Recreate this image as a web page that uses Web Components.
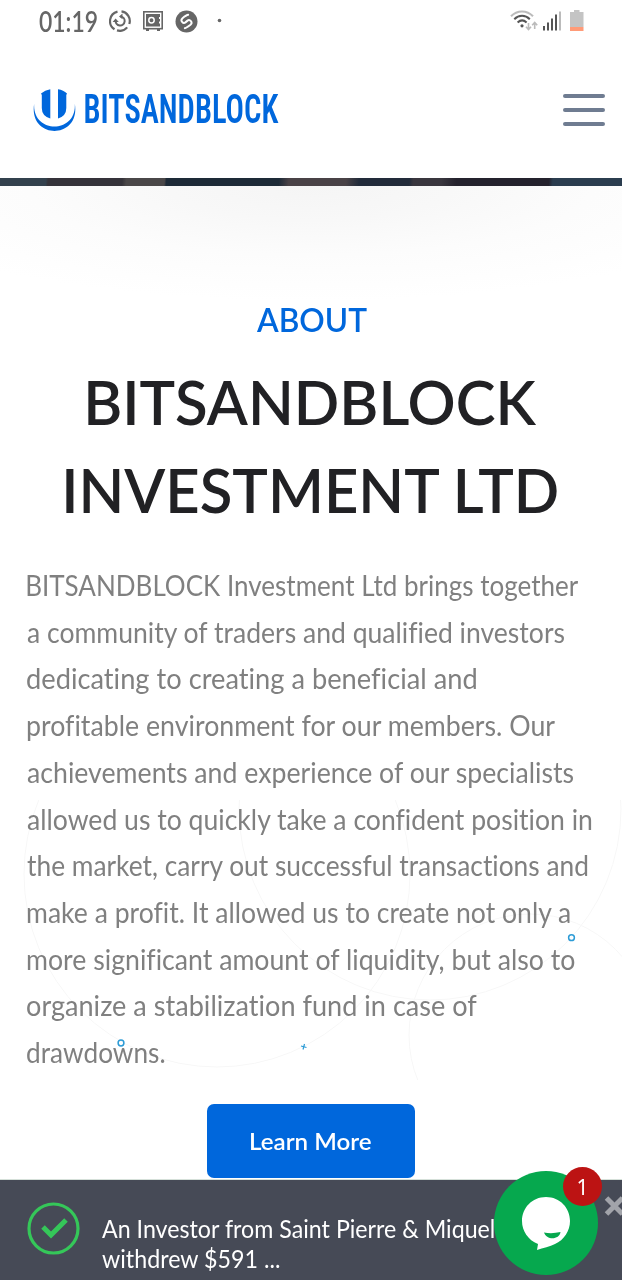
<!DOCTYPE html>
<html lang="en">
<head>
<meta charset="UTF-8">
<meta name="viewport" content="width=device-width, initial-scale=1.0">
<title>BITSANDBLOCK Investment Ltd</title>
<style>
    body {
        margin: 0;
        width: 622px;
        height: 1280px;
        overflow: hidden;
        position: relative;
        display: flex;
        flex-direction: column;
        background: #fff;
        font-family: Lato, "Liberation Sans", sans-serif;
        --primary: #0067dc;
    }
</style>
</head>
<body>
<status-bar></status-bar>
<site-header></site-header>
<hero-strip></hero-strip>
<about-section>
    <fit-text slot="label" width="111">ABOUT</fit-text>
    <fit-text slot="title" width="449">BITSANDBLOCK</fit-text>
    <fit-text slot="title" width="493">INVESTMENT LTD</fit-text>
    <fit-text width="551">BITSANDBLOCK Investment Ltd brings together</fit-text>
    <fit-text width="539">a community of traders and qualified investors</fit-text>
    <fit-text width="449">dedicating to creating a beneficial and</fit-text>
    <fit-text width="529">profitable environment for our members. Our</fit-text>
    <fit-text width="548">achievements and experience of our specialists</fit-text>
    <fit-text width="565">allowed us to quickly take a confident position in</fit-text>
    <fit-text width="561">the market, carry out successful transactions and</fit-text>
    <fit-text width="544">make a profit. It allowed us to create not only a</fit-text>
    <fit-text width="548">more significant amount of liquidity, but also to</fit-text>
    <fit-text width="450">organize a stabilization fund in case of</fit-text>
    <fit-text width="138">drawdowns.</fit-text>
    <fit-text slot="action" width="120">Learn More</fit-text>
</about-section>
<payout-toast>
    <fit-text width="393">An Investor from Saint Pierre &amp; Miquel</fit-text>
    <fit-text width="178">withdrew $591 ...</fit-text>
</payout-toast>
<chat-bubble count="1"></chat-bubble>

<script>
// One line of text, stretched so that its ink is exactly `width` px wide
class FitText extends HTMLElement {
    constructor() {
        super();
        this.attachShadow({ mode: 'open' });
    }

    connectedCallback() {
        const width = Number(this.getAttribute('width'));

        this.shadowRoot.innerHTML = `
            <style>
                :host { display: block; width: ${width}px; white-space: nowrap; }
                span { display: inline-block; transform-origin: 0 0; letter-spacing: 0.01px; font-variant-ligatures: none; }
            </style>
            <span><slot></slot></span>
        `;

        requestAnimationFrame(() => this.fit(width));
        this.fit(width);
    }

    fit(width) {
        const span = this.shadowRoot.querySelector('span');
        const ctx = document.createElement('canvas').getContext('2d');
        ctx.font = getComputedStyle(this).font;
        // any spacing at all turns the fi / ti ligatures off
        ctx.letterSpacing = '0.01px';
        const box = ctx.measureText(this.textContent.trim());
        const scale = width / (box.actualBoundingBoxLeft + box.actualBoundingBoxRight);
        span.style.transform = `translateX(${box.actualBoundingBoxLeft * scale}px) scaleX(${scale})`;
    }
}

class StatusBar extends HTMLElement {
    constructor() {
        super();
        this.attachShadow({ mode: 'open' });
    }

    connectedCallback() {
        this.shadowRoot.innerHTML = `
            <style>
                :host {
                    display: flex;
                    align-items: center;
                    height: 42px;
                    padding: 0 33px 0 39px;
                    box-sizing: border-box;
                    flex: none;
                    color: #666;
                }
                fit-text { font-size: 28px; font-weight: 600; line-height: 42px; font-family: Lato, sans-serif; }
                .icons { display: flex; align-items: center; gap: 12px; margin-left: 12px; flex: 1; }
                .signal { display: flex; align-items: center; gap: 5px; }
                svg { display: block; }
            </style>
            <fit-text width="58">01:19</fit-text>
            <div class="icons">
                <svg width="22" height="22" viewBox="0 0 22 22" fill="none" stroke="#666" stroke-width="2.2">
                    <path d="M8.500 1.600A9.700 9.700 0 0 0 5.500 19.200M8 20.400A9.700 9.700 0 0 0 18.200 17.400M20.300 14A9.700 9.700 0 0 0 12.500 1.400"/>
                    <path d="M6.700 10.500a4.500 4.500 0 1 0 5-4" stroke-width="2"/>
                    <path d="M3.600 12l3-3.400 3.200 3.400zM13.500 3.600v5.600l-3.500-2.700z" fill="#666" stroke="none"/>
                </svg>
                <svg width="20" height="20" viewBox="0 0 20 20" fill="none" stroke="#666">
                    <rect x=".8" y=".8" width="18.400" height="16.900" stroke-width="1.600"/>
                    <rect x="3" y="3" width="14" height="12.500" fill="#666" stroke="none"/>
                    <circle cx="8.500" cy="9.200" r="2.700" stroke="#fff" stroke-width="1.500"/>
                    <path d="M16.500 6v2M16.500 10.500v2" stroke="#fff"/>
                    <path d="M3 19h3M14 19h3" stroke-width="1.800"/>
                </svg>
                <svg width="23" height="23" viewBox="0 0 23 23">
                    <circle cx="11.500" cy="11.500" r="11" fill="#666"/>
                    <path d="M13.200 4.800Q11.500 5 7.500 8.200C4.800 10.500 8 14.500 10.800 12.300l2.400-2M9.800 18.200Q11.500 18 15.500 14.800C18.200 12.500 15 8.500 12.200 10.700l-2.400 2" fill="none" stroke="#fff" stroke-width="1.900" stroke-linecap="round"/>
                </svg>
                <svg width="20" height="22" viewBox="0 0 20 22"><circle cx="9.500" cy="10.500" r="1.800" fill="#666"/></svg>
            </div>
            <div class="signal">
                <svg width="28" height="22" viewBox="0 0 28 22" fill="none" stroke-width="2">
                    <path d="M1 6.300C7-.2 17-.2 23 6.300" stroke="#bbb"/>
                    <path d="M4.300 9.300c4.500-4.600 11-4.600 15.500 0M7.600 12.500c3-2.800 6-2.800 9 0" stroke="#555"/>
                    <circle cx="12" cy="15.800" r="1.600" fill="#555"/>
                    <path d="M18.500 13v6M16 16.800l2.500 2.800 2.500-2.800M24.700 19v-6M22.200 15.200l2.500-2.800 2.500 2.800" stroke="#bbb" stroke-width="1.600"/>
                </svg>
                <svg width="18" height="22" viewBox="0 0 18 22">
                    <path d="M0 16h2v4.500H0zM4 12.500h2v8H4zM8 8.500h2v12H8zM12 4.500h2v16h-2z" fill="#555"/>
                    <path d="M16 1.500h2v19h-2z" fill="#bbb"/>
                </svg>
                <svg width="23" height="22" viewBox="0 0 23 22">
                    <path d="M8 0h5.500v2H17.500v15H4V2h4z" fill="#c4c4c4"/>
                    <path d="M4 17h13.500v4H4z" fill="#ff9b78"/>
                </svg>
            </div>
        `;
    }
}

class SiteHeader extends HTMLElement {
    constructor() {
        super();
        this.attachShadow({ mode: 'open' });
    }

    connectedCallback() {
        this.shadowRoot.innerHTML = `
            <style>
                :host {
                    display: flex;
                    align-items: center;
                    justify-content: space-between;
                    height: 136px;
                    padding: 0 17px 0 33px;
                    box-sizing: border-box;
                    flex: none;
                    background: #fff;
                }
                .logo { display: flex; align-items: center; gap: 9px; color: var(--primary); }
                fit-text { font: condensed 600 40px/46px Roboto, sans-serif; }
                .menu { display: grid; gap: 10px; }
                .menu i { width: 42px; height: 4px; border-radius: 2px; background: #6f7c91; }
            </style>
            <div class="logo">
                <svg width="43" height="44" viewBox="0 0 43 44" fill="#0067dc">
                    <path d="M8 5.500Q12 2 17.300 1.300V30.500Q8.800 28 8.800 20V7zM25 1.300q5.500.7 9 4.200L33.300 7v13q0 8-8.300 10.500z"/>
                    <path d="M1.200 15.500C-1 46 44 46 41.800 15.500 48 52-5 52 1.200 15.500z"/>
                </svg>
                <fit-text width="194">BITSANDBLOCK</fit-text>
            </div>
            <div class="menu"><i></i><i></i><i></i></div>
        `;
    }
}

class HeroStrip extends HTMLElement {
    constructor() {
        super();
        this.attachShadow({ mode: 'open' });
    }

    connectedCallback() {
        this.shadowRoot.innerHTML = `
            <style>
                :host {
                    display: block;
                    flex: none;
                    height: 8px;
                    background: linear-gradient(95deg,
                        #33414d 0 46px, #35333a 48px 122px, #4a4748 126px 164px,
                        #1d2a37 166px 278px, #494246 288px 345px, #222b3a 358px 408px,
                        #39363e 412px 440px, #24222d 455px 547px, #2b3d4f 551px);
                }
            </style>
        `;
    }
}

class AboutSection extends HTMLElement {
    constructor() {
        super();
        this.attachShadow({ mode: 'open' });
    }

    connectedCallback() {
        this.shadowRoot.innerHTML = `
            <style>
                :host {
                    display: flex;
                    flex-direction: column;
                    position: relative;
                    height: 993px;
                    flex: none;
                    box-sizing: border-box;
                    padding-top: 108px;
                    background: radial-gradient(ellipse 470px 115px at 50% 0, #f5f5f5, #f8f8f8 30%, #fcfcfc 60%, #fff) no-repeat;
                }
                .label, .title, .action { display: flex; flex-direction: column; align-items: center; }
                .label { font-size: 33.500px; font-weight: 600; line-height: 50px; color: var(--primary); }
                .title { margin: 14px 0 0 3px; font-size: 62px; font-weight: 600; line-height: 87.500px; color: #212124; }
                .copy { margin-top: 29px; padding-left: 26.500px; font-size: 28px; line-height: 46.700px; color: #808080; }
                .action {
                    align-self: center;
                    width: 208px;
                    height: 74px;
                    margin-top: 28px;
                    border-radius: 7px;
                    background: var(--primary);
                    color: #fff;
                    font-size: 23.500px;
                    font-weight: 600;
                    line-height: 74px;
                }
                .shapes { position: absolute; left: 0; top: 614px; mix-blend-mode: multiply; }
            </style>
            <div class="label"><slot name="label"></slot></div>
            <div class="title"><slot name="title"></slot></div>
            <div class="copy"><slot></slot></div>
            <div class="action"><slot name="action"></slot></div>
            <svg class="shapes" width="622" height="280" viewBox="0 800 622 280" fill="none">
                <g stroke="#f7f7f7">
                    <circle cx="217" cy="874" r="193"/>
                    <circle cx="430" cy="809" r="191"/>
                    <circle cx="530" cy="1035" r="121"/>
                </g>
                <g stroke="#2c9bd6" stroke-width="1.500">
                    <circle cx="571.500" cy="937.700" r="2.900"/>
                    <circle cx="121" cy="1043" r="2.900"/>
                    <path d="M301 1046l5.500 1.500M304.500 1044l-1.500 5.500" stroke-width="1.200"/>
                </g>
            </svg>
        `;
    }
}

class PayoutToast extends HTMLElement {
    constructor() {
        super();
        this.attachShadow({ mode: 'open' });
    }

    connectedCallback() {
        this.shadowRoot.innerHTML = `
            <style>
                :host {
                    display: flex;
                    align-items: flex-start;
                    height: 101px;
                    flex: none;
                    box-sizing: border-box;
                    padding: 22px 0 0 27px;
                    border-top: 1px solid #d5e0d9;
                    background: #464a56;
                    color: #fff;
                    font-size: 25px;
                    line-height: 30px;
                }
                .text { margin: 11px 0 0 22px; flex: 1; }
                .close { flex: none; margin-top: -7px; }
            </style>
            <svg width="53" height="53" viewBox="0 0 53 53" fill="none" stroke="#35c759">
                <circle cx="26.500" cy="26.500" r="24.500" stroke-width="3.200"/>
                <path d="M16 25l8 8 15-15" stroke-width="5"/>
            </svg>
            <div class="text"><slot></slot></div>
            <svg class="close" width="18" height="22" viewBox="0 0 18 22" stroke="#a2a4aa" stroke-width="5">
                <path d="M2.500 3l16 16M18.500 3l-16 16"/>
            </svg>
        `;
    }
}

class ChatBubble extends HTMLElement {
    constructor() {
        super();
        this.attachShadow({ mode: 'open' });
    }

    connectedCallback() {
        const count = this.getAttribute('count') || '0';

        this.shadowRoot.innerHTML = `
            <style>
                :host {
                    position: absolute;
                    left: 494px;
                    top: 1171px;
                    width: 104px;
                    height: 104px;
                    border-radius: 50%;
                    background: #06a84e;
                }
                svg { display: block; }
                .badge {
                    position: absolute;
                    left: 69px;
                    top: -4px;
                    width: 39px;
                    height: 39px;
                    border-radius: 50%;
                    background: #bc1313;
                    color: #fff;
                    font: 21px/41px "Noto Sans", sans-serif;
                    text-align: center;
                }
            </style>
            <svg width="104" height="104" viewBox="0 0 104 104">
                <path d="M52 26c14 0 24 11 24 24 0 10-6 19-15 23-5 2.500-12 4-18 6l1-6C34 69 28 60 28 50c0-13 10-24 24-24z" fill="#fff"/>
                <path d="M50 61.500q8 1.500 16.500-.5c-1 8-14 8.500-16.500.5z" fill="#06a84e"/>
            </svg>
            <div class="badge">${count}</div>
        `;
    }
}

customElements.define('fit-text', FitText);
customElements.define('status-bar', StatusBar);
customElements.define('site-header', SiteHeader);
customElements.define('hero-strip', HeroStrip);
customElements.define('about-section', AboutSection);
customElements.define('payout-toast', PayoutToast);
customElements.define('chat-bubble', ChatBubble);
</script>
</body>
</html>
